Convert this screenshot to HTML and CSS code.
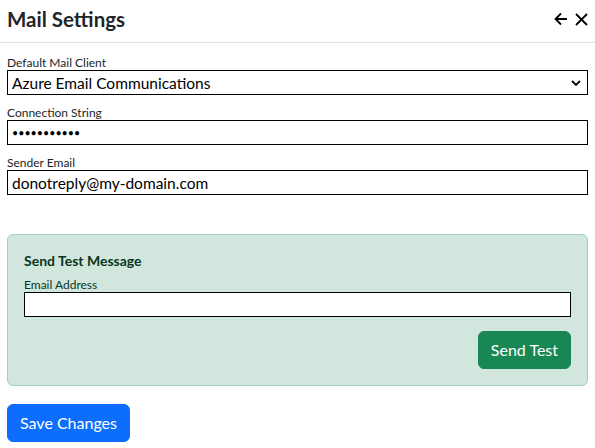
FILE: index.html
```html
<!DOCTYPE html>
<html>
<head>
<meta charset="utf-8">
<link rel="stylesheet" href="styles.css">
</head>
<body>
<div class="panel">
  <header class="header">
    <h1 class="title">Mail Settings</h1>
    <div class="actions">
      <svg class="icon" width="14" height="14" viewBox="0 0 14 14"><path d="M13 7H1.5M7 1.5L1.5 7L7 12.5" fill="none" stroke="#000" stroke-width="1.8"/></svg>
      <svg class="icon" width="13" height="13" viewBox="0 0 13 13"><path d="M1 1L12 12M12 1L1 12" fill="none" stroke="#000" stroke-width="1.8"/></svg>
    </div>
  </header>
  <div class="body">
    <div class="field">
      <label class="label">Default Mail Client</label>
      <select class="control select"><option>Azure Email Communications</option></select>
    </div>
    <div class="field">
      <label class="label">Connection String</label>
      <input class="control" type="password" value="12345678901">
    </div>
    <div class="field">
      <label class="label">Sender Email</label>
      <input class="control" type="text" value="donotreply@my-domain.com">
    </div>
    <div class="test-box">
      <div class="test-title">Send Test Message</div>
      <label class="label">Email Address</label>
      <input class="control" type="text" value="">
      <div class="test-actions">
        <button class="btn btn-success">Send Test</button>
      </div>
    </div>
    <button class="btn btn-primary">Save Changes</button>
  </div>
</div>
</body>
</html>
```
FILE: styles.css
```css
* { box-sizing: border-box; }
html, body { margin: 0; padding: 0; background: #fff; }
body {
  font-family: "Segoe UI", Lato, "Noto Sans", sans-serif;
  color: #212529;
}
.header {
  height: 43px;
  border-bottom: 1px solid #dee2e6;
  display: flex;
  align-items: center;
  justify-content: space-between;
  padding: 0 7px 0 7px;
}
.title {
  margin: 0;
  font-size: 20.5px;
  font-weight: 700;
  color: #212529;
  line-height: 24px;
  padding-bottom: 4px;
}
.actions {
  display: flex;
  align-items: center;
  gap: 7px;
  padding-bottom: 4px;
}
.icon { display: block; }
.body {
  padding: 12px 7px 0 7px;
}
.field { margin-bottom: 10px; }
.label {
  display: block;
  font-size: 12px;
  line-height: 15px;
  color: #212529;
}
.control {
  display: block;
  width: 100%;
  height: 25px;
  border: 1px solid #000;
  border-radius: 0;
  padding: 0 4px;
  font-family: inherit;
  font-size: 15.5px;
  color: #000;
  background: #fff;
  margin: 0;
  outline: none;
}
input[type=password].control { font-size: 10.7px; letter-spacing: 0; }
.select {
  appearance: none;
  -webkit-appearance: none;
  background: #fff url("data:image/svg+xml,%3Csvg xmlns='http://www.w3.org/2000/svg' width='10' height='6' viewBox='0 0 10 6'%3E%3Cpath d='M1 1l4 4 4-4' fill='none' stroke='%23000' stroke-width='1.8'/%3E%3C/svg%3E") no-repeat right 6px center;
}
.test-box {
  margin-top: 39px;
  background: #d1e7dd;
  border: 1px solid #a3cfbb;
  border-radius: 6px;
  padding: 16px;
  color: #0a3622;
}
.test-title {
  font-size: 14px;
  font-weight: 700;
  line-height: 20px;
  margin-bottom: 6px;
  color: #0a3622;
}
.test-box .label { color: #0a3622; }
.test-actions {
  display: flex;
  justify-content: flex-end;
  margin-top: 14px;
}
.btn {
  font-family: inherit;
  font-size: 16px;
  line-height: 24px;
  padding: 6px 12px;
  border-radius: 6px;
  border: 1px solid transparent;
  color: #fff;
  cursor: pointer;
}
.btn-success { background: #198754; border-color: #198754; }
.btn-primary { background: #0d6efd; border-color: #0d6efd; margin-top: 18px; }
```
